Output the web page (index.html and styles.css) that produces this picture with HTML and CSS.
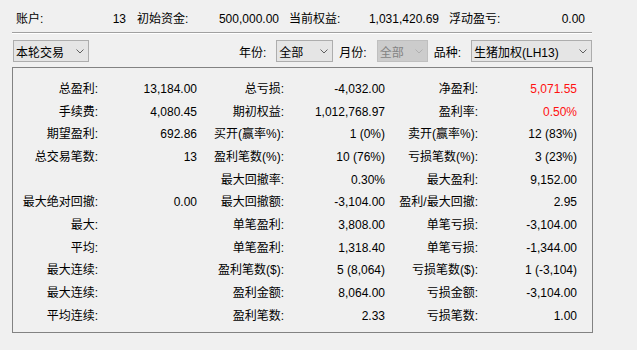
FILE: index.html
```html
<!DOCTYPE html>
<html lang="zh">
<head>
<meta charset="utf-8">
<title>交易统计</title>
<link rel="stylesheet" href="styles.css">
</head>
<body>
<div class="page">
  <div class="summary">
    <div class="pair w1"><span>账户:</span><span>13</span></div>
    <div class="pair w2"><span>初始资金:</span><span>500,000.00</span></div>
    <div class="pair w3"><span>当前权益:</span><span>1,031,420.69</span></div>
    <div class="pair w4"><span>浮动盈亏:</span><span>0.00</span></div>
  </div>
  <div class="filters">
    <div class="select s1"><span>本轮交易</span><svg class="chev" width="8" height="5" viewBox="0 0 8 5"><path d="M0.5 0.5 L4 4 L7.5 0.5" fill="none" stroke="#606060" stroke-width="1"/></svg></div>
    <div class="spacer"></div>
    <span class="flabel">年份:</span>
    <div class="select s2"><span>全部</span><svg class="chev" width="8" height="5" viewBox="0 0 8 5"><path d="M0.5 0.5 L4 4 L7.5 0.5" fill="none" stroke="#606060" stroke-width="1"/></svg></div>
    <span class="flabel">月份:</span>
    <div class="select s3 disabled"><span>全部</span><svg class="chev" width="8" height="5" viewBox="0 0 8 5"><path d="M0.5 0.5 L4 4 L7.5 0.5" fill="none" stroke="#b0b0b0" stroke-width="1"/></svg></div>
    <span class="flabel">品种:</span>
    <div class="select s4"><span>生猪加权(LH13)</span><svg class="chev" width="8" height="5" viewBox="0 0 8 5"><path d="M0.5 0.5 L4 4 L7.5 0.5" fill="none" stroke="#606060" stroke-width="1"/></svg></div>
  </div>
  <div class="group">
    <div class="stats">
      <span>总盈利:</span><span>13,184.00</span><span>总亏损:</span><span>-4,032.00</span><span>净盈利:</span><span class="red">5,071.55</span>
      <span>手续费:</span><span>4,080.45</span><span>期初权益:</span><span>1,012,768.97</span><span>盈利率:</span><span class="red">0.50%</span>
      <span>期望盈利:</span><span>692.86</span><span>买开(赢率%):</span><span>1 (0%)</span><span>卖开(赢率%):</span><span>12 (83%)</span>
      <span>总交易笔数:</span><span>13</span><span>盈利笔数(%):</span><span>10 (76%)</span><span>亏损笔数(%):</span><span>3 (23%)</span>
      <span></span><span></span><span>最大回撤率:</span><span>0.30%</span><span>最大盈利:</span><span>9,152.00</span>
      <span>最大绝对回撤:</span><span>0.00</span><span>最大回撤额:</span><span>-3,104.00</span><span>盈利/最大回撤:</span><span>2.95</span>
      <span>最大:</span><span></span><span>单笔盈利:</span><span>3,808.00</span><span>单笔亏损:</span><span>-3,104.00</span>
      <span>平均:</span><span></span><span>单笔盈利:</span><span>1,318.40</span><span>单笔亏损:</span><span>-1,344.00</span>
      <span>最大连续:</span><span></span><span>盈利笔数($):</span><span>5 (8,064)</span><span>亏损笔数($):</span><span>1 (-3,104)</span>
      <span>最大连续:</span><span></span><span>盈利金额:</span><span>8,064.00</span><span>亏损金额:</span><span>-3,104.00</span>
      <span>平均连续:</span><span></span><span>盈利笔数:</span><span>2.33</span><span>亏损笔数:</span><span>1.00</span>
    </div>
  </div>
</div>
</body>
</html>
```

FILE: styles.css
```css
html, body {
  margin: 0;
  padding: 0;
  background: #f0f0f0;
}
body {
  font-family: "Liberation Sans", "Noto Sans CJK SC", sans-serif;
  font-size: 12px;
  color: #000;
}
.page {
  width: 580px;
  padding-left: 12px;
}
.summary {
  display: flex;
  height: 20px;
  padding: 12px 0 0 4px;
  line-height: 14px;
  border-bottom: 1px solid #a0a0a0;
  box-shadow: 0 1px 0 #ffffff;
}
.pair {
  display: flex;
  justify-content: space-between;
  white-space: nowrap;
}
.w1 { width: 110px; margin-right: 11px; }
.w2 { width: 142px; margin-right: 10px; }
.w3 { width: 150px; margin-right: 10px; }
.w4 { width: 136px; }
.filters {
  display: flex;
  align-items: center;
  height: 22px;
  margin-top: 7px;
}
.select {
  box-sizing: border-box;
  height: 22px;
  border: 1px solid #adadad;
  background: #e5e5e5;
  display: flex;
  align-items: center;
  justify-content: space-between;
  padding: 0 4px 0 2px;
  white-space: nowrap;
}
.select.disabled {
  background: #cccccc;
  border-color: #bfbfbf;
  color: #838383;
}
.chev { display: block; flex: none; }
.s1 { width: 76px; margin-left: 1px; }
.s2 { width: 57px; }
.s3 { width: 51px; }
.s4 { width: 121px; }
.spacer { flex: 1; }
.flabel {
  margin: 0 10px 0 6px;
  white-space: nowrap;
}
.group {
  box-sizing: border-box;
  width: 581px;
  height: 266px;
  margin-top: 5px;
  border: 1px solid #828282;
  padding-top: 9.6px;
}
.stats {
  display: grid;
  grid-template-columns: 85px 99px 87px 101px 93px 99px;
  grid-auto-rows: 22.7px;
  align-items: center;
  line-height: 14px;
}
.stats span {
  text-align: right;
  white-space: nowrap;
}
.red { color: #ff1010; }
```
